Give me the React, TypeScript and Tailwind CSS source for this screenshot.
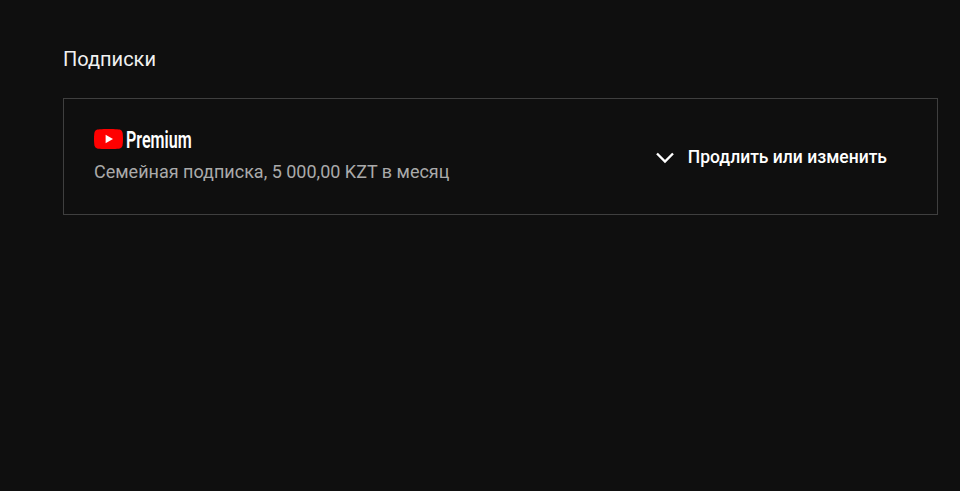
export default function App() {
  return (
    <div className="h-[491px] w-[960px] overflow-hidden bg-[#0f0f0f] pl-[63px] pr-[22px] pt-[47px] font-['Roboto',sans-serif]">
      <h2 className="text-[20px] leading-[24px] font-normal text-[#f1f1f1]">Подписки</h2>
      <div className="mt-[27px] flex h-[117px] items-center justify-between border border-[#3f3f3f] pl-[30px] pr-[50px]">
        <div className="flex flex-col">
          <div className="flex h-[22px] -translate-y-[2px] items-center">
            <svg width="29" height="20" viewBox="0 0 29 20" className="shrink-0">
              <path d="M28.4 3.1A3.6 3.6 0 0 0 25.9.6C23.6 0 14.5 0 14.5 0S5.4 0 3.1.6A3.6 3.6 0 0 0 .6 3.1C0 5.4 0 10 0 10s0 4.6.6 6.9a3.6 3.6 0 0 0 2.5 2.5c2.3.6 11.4.6 11.4.6s9.1 0 11.4-.6a3.6 3.6 0 0 0 2.5-2.5c.6-2.3.6-6.9.6-6.9s0-4.6-.6-6.9Z" fill="#ff0000" />
              <path d="M11.6 14.2 19 10l-7.4-4.2v8.4Z" fill="#fff" />
            </svg>
            <span className="ml-[3px] origin-left translate-y-[1px] scale-x-[0.67] text-[24px] leading-[22px] font-semibold text-white">Premium</span>
          </div>
          <div className="mt-[9px] text-[18px] leading-[22px] text-[#aaaaaa]">Семейная подписка, 5 000,00 KZT в месяц</div>
        </div>
        <button className="flex items-center text-[17.5px] leading-[22px] font-medium text-white">
          <svg width="24" height="24" viewBox="0 0 24 24" className="mr-[11px]" fill="none" stroke="#ffffff" strokeWidth="2.4">
            <path d="M4 8.5 12 16.5 20 8.5" />
          </svg>
          Продлить или изменить
        </button>
      </div>
    </div>
  );
}
